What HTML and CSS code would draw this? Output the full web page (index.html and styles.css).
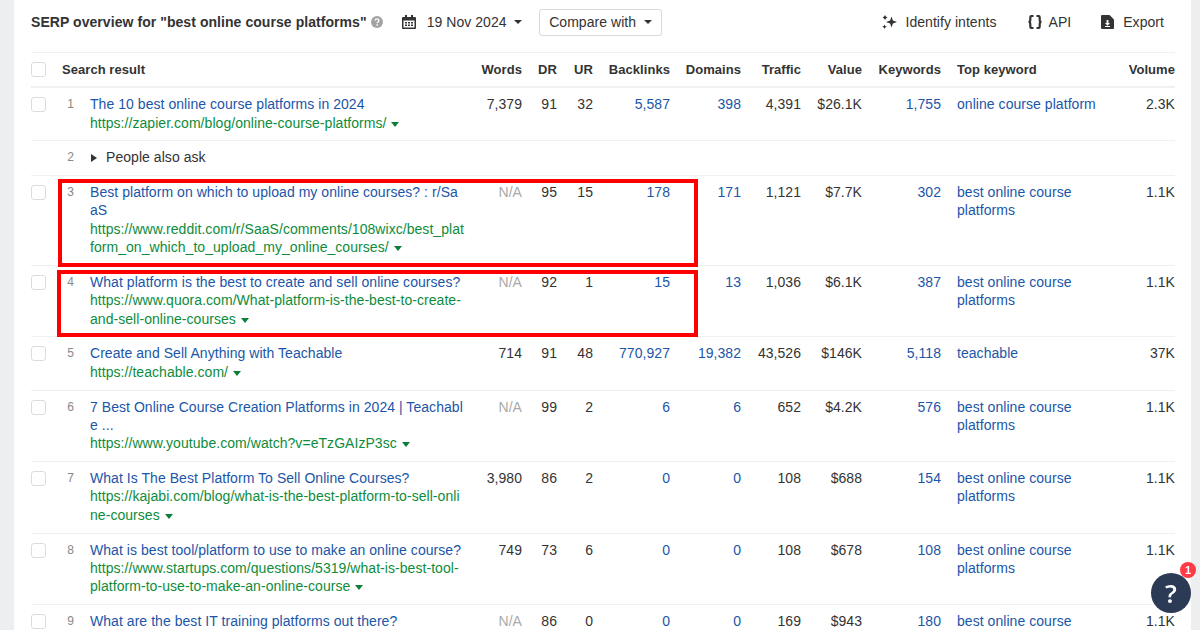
FILE: index.html
```html
<!DOCTYPE html>
<html lang="en">
<head>
    <meta charset="UTF-8">
    <title>SERP overview</title>
    <link rel="stylesheet" href="styles.css">
</head>
<body>
    <div class="panel">
        <div class="toolbar">
            <div class="serp-title">SERP overview for "best online course platforms"</div>
            <svg class="help-icon" viewBox="0 0 12 12"><circle cx="6" cy="6" r="6" fill="#a3a3a3"/><path d="M4.200 4.600c0-2.300 3.700-2.300 3.700-.1 0 1.400-1.600 1.300-1.600 2.700" fill="none" stroke="#fff" stroke-width="1.300"/><rect x="5.500" y="8.200" width="1.500" height="1.500" fill="#fff"/></svg>
            <div class="date-picker">
                <svg class="calendar-icon" viewBox="0 0 14 14"><path fill="#333" d="M1 2h2V0h2v2h4V0h2v2h2a1 1 0 0 1 1 1v10a1 1 0 0 1-1 1H1a1 1 0 0 1-1-1V3a1 1 0 0 1 1-1zm.5 3.500v7h11v-7z"/><path fill="#333" d="M3 7h2v1.500H3zM6 7h2v1.500H6zM9 7h2v1.500H9zM3 9.500h2V11H3zM6 9.500h2V11H6zM9 9.500h2V11H9z"/></svg>
                <span>19 Nov 2024</span>
                <span class="caret"></span>
            </div>
            <div class="compare-btn">Compare with <span class="caret"></span></div>
            <div class="toolbar-actions">
                <div class="action action-intents">
                    <svg class="action-icon" viewBox="0 0 15 14"><path fill="#333" d="M9.500 1.500l1.400 4.100L15 7l-4.100 1.400-1.400 4.100-1.400-4.100L4 7l4.100-1.400z"/><path fill="#333" d="M3 0l.9 1.600L5.500 2.500l-1.600.9L3 5l-.9-1.600L.5 2.500l1.600-.9zM2.500 9.500l.7 1.600 1.600.7-1.600.7-.7 1.500-.7-1.500-1.600-.7 1.600-.7z"/></svg>
                    <span>Identify intents</span>
                </div>
                <div class="action action-api">
                    <svg class="action-icon api-icon" viewBox="0 0 16 14"><path fill="none" stroke="#333" stroke-width="2.200" d="M6.500 1H4.800C3.800 1 3.300 1.500 3.300 2.500V5c0 1-.5 2-1.800 2 1.300 0 1.800 1 1.800 2v2.500c0 1 .5 1.500 1.500 1.500h1.700M9.500 1h1.700c1 0 1.500.5 1.500 1.500V5c0 1 .5 2 1.800 2-1.300 0-1.800 1-1.800 2v2.500c0 1-.5 1.500-1.500 1.500H9.500"/></svg>
                    <span>API</span>
                </div>
                <div class="action">
                    <svg class="action-icon export-icon" viewBox="0 0 13 14"><path fill="#333" d="M1 0h7.500L13 4.500V13a1 1 0 0 1-1 1H1a1 1 0 0 1-1-1V1a1 1 0 0 1 1-1z"/><path fill="#fff" d="M5.600 5h1.800v3H9l-2.500 2.700L4 8h1.600z"/><rect x="4" y="11" width="5" height="1" fill="#fff"/></svg>
                    <span>Export</span>
                </div>
            </div>
        </div>

        <table class="serp-table">
            <colgroup>
                <col class="c-check"><col class="c-num"><col class="c-result"><col class="c-words"><col class="c-dr"><col class="c-ur">
                <col class="c-backlinks"><col class="c-domains"><col class="c-traffic"><col class="c-value"><col class="c-keywords"><col class="c-top"><col class="c-volume">
            </colgroup>
            <thead>
                <tr>
                    <th><span class="checkbox"></span></th>
                    <th colspan="2" class="left">Search result</th>
                    <th>Words</th><th>DR</th><th>UR</th><th>Backlinks</th><th>Domains</th><th>Traffic</th><th>Value</th><th>Keywords</th>
                    <th class="left top-kw">Top keyword</th><th>Volume</th>
                </tr>
            </thead>
            <tbody>
                <tr>
                    <td><span class="checkbox"></span></td><td class="num">1</td>
                    <td class="result"><a class="title">The 10 best online course platforms in 2024</a><a class="url">https://zapier.com/blog/online-course-platforms/ <span class="caret green"></span></a></td>
                    <td>7,379</td><td>91</td><td>32</td><td class="link">5,587</td><td class="link">398</td><td>4,391</td><td>$26.1K</td><td class="link">1,755</td>
                    <td class="link top-kw">online course platform</td><td>2.3K</td>
                </tr>
                <tr class="paa-row">
                    <td></td><td class="num">2</td>
                    <td colspan="11" class="left"><span class="caret-right"></span>People also ask</td>
                </tr>
                <tr>
                    <td><span class="checkbox"></span></td><td class="num">3</td>
                    <td class="result"><a class="title">Best platform on which to upload my online courses? : r/SaaS</a><a class="url">https://www.reddit.com/r/SaaS/comments/108wixc/best_platform_on_which_to_upload_my_online_courses/ <span class="caret green"></span></a></td>
                    <td class="na">N/A</td><td>95</td><td>15</td><td class="link">178</td><td class="link">171</td><td>1,121</td><td>$7.7K</td><td class="link">302</td>
                    <td class="link top-kw">best online course platforms</td><td>1.1K</td>
                </tr>
                <tr>
                    <td><span class="checkbox"></span></td><td class="num">4</td>
                    <td class="result"><a class="title">What platform is the best to create and sell online courses?</a><a class="url">https://www.quora.com/What-platform-is-the-best-to-create-and-sell-online-courses <span class="caret green"></span></a></td>
                    <td class="na">N/A</td><td>92</td><td>1</td><td class="link">15</td><td class="link">13</td><td>1,036</td><td>$6.1K</td><td class="link">387</td>
                    <td class="link top-kw">best online course platforms</td><td>1.1K</td>
                </tr>
                <tr>
                    <td><span class="checkbox"></span></td><td class="num">5</td>
                    <td class="result"><a class="title">Create and Sell Anything with Teachable</a><a class="url">https://teachable.com/ <span class="caret green"></span></a></td>
                    <td>714</td><td>91</td><td>48</td><td class="link">770,927</td><td class="link">19,382</td><td>43,526</td><td>$146K</td><td class="link">5,118</td>
                    <td class="link top-kw">teachable</td><td>37K</td>
                </tr>
                <tr>
                    <td><span class="checkbox"></span></td><td class="num">6</td>
                    <td class="result"><a class="title">7 Best Online Course Creation Platforms in 2024 | Teachable ...</a><a class="url">https://www.youtube.com/watch?v=eTzGAIzP3sc <span class="caret green"></span></a></td>
                    <td class="na">N/A</td><td>99</td><td>2</td><td class="link">6</td><td class="link">6</td><td>652</td><td>$4.2K</td><td class="link">576</td>
                    <td class="link top-kw">best online course platforms</td><td>1.1K</td>
                </tr>
                <tr>
                    <td><span class="checkbox"></span></td><td class="num">7</td>
                    <td class="result"><a class="title">What Is The Best Platform To Sell Online Courses?</a><a class="url">https://kajabi.com/blog/what-is-the-best-platform-to-sell-online-courses <span class="caret green"></span></a></td>
                    <td>3,980</td><td>86</td><td>2</td><td class="link">0</td><td class="link">0</td><td>108</td><td>$688</td><td class="link">154</td>
                    <td class="link top-kw">best online course platforms</td><td>1.1K</td>
                </tr>
                <tr>
                    <td><span class="checkbox"></span></td><td class="num">8</td>
                    <td class="result"><a class="title">What is best tool/platform to use to make an online course?</a><a class="url">https://www.startups.com/questions/5319/what-is-best-tool-platform-to-use-to-make-an-online-course <span class="caret green"></span></a></td>
                    <td>749</td><td>73</td><td>6</td><td class="link">0</td><td class="link">0</td><td>108</td><td>$678</td><td class="link">108</td>
                    <td class="link top-kw">best online course platforms</td><td>1.1K</td>
                </tr>
                <tr>
                    <td><span class="checkbox"></span></td><td class="num">9</td>
                    <td class="result"><a class="title">What are the best IT training platforms out there?</a></td>
                    <td class="na">N/A</td><td>86</td><td>0</td><td class="link">0</td><td class="link">0</td><td>169</td><td>$943</td><td class="link">180</td>
                    <td class="link top-kw">best online course platforms</td><td>1.1K</td>
                </tr>
            </tbody>
        </table>
    </div>

    <!-- red annotation boxes drawn over the screenshot -->
    <div class="mark mark-one"></div>
    <div class="mark mark-two"></div>

    <div class="help-btn">?<span class="help-badge">1</span></div>
</body>
</html>
```

FILE: styles.css
```css
html, body {
    height: 630px;
    overflow: hidden;
}
body {
    margin: 0;
    background-color: #eceef0;
    font-family: "Liberation Sans", Arial, sans-serif;
    font-size: 14px;
    letter-spacing: 0.05px;
    color: #333;
}
.panel {
    margin-left: 14px;
    width: 1177px;
    height: 630px;
    padding: 0 16px 0 17px;
    box-sizing: border-box;
    background: white;
}

.toolbar {
    display: flex;
    align-items: center;
    height: 52px;
    padding-bottom: 8px;
    box-sizing: border-box;
}
.serp-title {
    font-weight: bold;
    white-space: nowrap;
    letter-spacing: 0.06px;
}
.help-icon {
    width: 12px;
    height: 12px;
    margin-left: 4px;
}
.date-picker {
    display: flex;
    align-items: center;
    margin-left: 19px;
}
.calendar-icon {
    width: 14px;
    height: 14px;
    margin-right: 11px;
}
.date-picker .caret {
    margin-left: 7px;
}
.compare-btn {
    margin-left: 17px;
    width: 123px;
    height: 27px;
    padding-left: 1px;
    box-sizing: border-box;
    border: 1px solid #d9d9d9;
    border-radius: 3px;
    display: flex;
    align-items: center;
    justify-content: center;
    gap: 4px;
    white-space: pre;
}
.toolbar-actions {
    margin-left: auto;
    margin-right: 11px;
    display: flex;
    align-items: center;
}
.action {
    display: flex;
    align-items: center;
    margin-left: 30px;
}
.action-icon {
    width: 15px;
    height: 14px;
    margin-right: 8px;
}
.api-icon {
    width: 16px;
    margin-right: 6px;
}
.export-icon {
    width: 13px;
    margin-right: 9px;
}

.caret {
    display: inline-block;
    width: 0;
    height: 0;
    border-left: 4px solid transparent;
    border-right: 4px solid transparent;
    border-top: 4px solid #333;
    vertical-align: middle;
}
.caret.green {
    border-top: 5px solid #0b7f3a;
    margin-left: 1px;
    vertical-align: 1px;
}
.caret-right {
    display: inline-block;
    width: 0;
    height: 0;
    border-top: 4px solid transparent;
    border-bottom: 4px solid transparent;
    border-left: 6px solid #333;
    margin: 0 9px 0 1px;
}

.serp-table {
    width: 1144px;
    table-layout: fixed;
    border-collapse: collapse;
    line-height: 18.4px;
}
.c-check { width: 31px; }
.c-num { width: 28px; }
.c-result { width: 377px; }
.c-words { width: 55px; }
.c-dr { width: 35px; }
.c-ur { width: 36px; }
.c-backlinks { width: 77px; }
.c-domains { width: 71px; }
.c-traffic { width: 60px; }
.c-value { width: 61px; }
.c-keywords { width: 79px; }
.c-top { width: 170px; }
.c-volume { width: 64px; }

.serp-table th,
.serp-table td {
    padding: 7px 0 8.3px;
    text-align: right;
    vertical-align: top;
    border-top: 1px solid #f0f0f0;
}
.serp-table th {
    font-size: 13px;
    border-bottom: 2px solid #f0f0f0;
    padding: 8px 0 6.8px;
}
.serp-table th:first-child,
.serp-table td:first-child {
    text-align: left;
}
.serp-table .left {
    text-align: left;
}
.serp-table .top-kw {
    text-align: left;
    padding-left: 16px;
    padding-right: 14px;
}
.checkbox {
    display: block;
    width: 15px;
    height: 15px;
    box-sizing: border-box;
    border: 1px solid #dcdcdc;
    border-radius: 3px;
    margin-top: 2px;
}
.serp-table th .checkbox {
    margin-top: 1px;
}
.serp-table .num {
    padding-right: 16px;
    font-size: 12px;
    color: #888;
}
.serp-table .result {
    text-align: left;
    word-break: break-all;
    padding-right: 3px;
}
.title,
.url {
    display: block;
}
.title {
    color: #1b56a8;
}
.url {
    color: #0e8c3c;
}
.link {
    color: #1b56a8;
}
.na {
    color: #aaa;
}

.mark {
    position: absolute;
    box-sizing: border-box;
    border: 4px solid #f00;
}
.mark-one {
    left: 58px;
    top: 179px;
    width: 640px;
    height: 88px;
}
.mark-two {
    left: 57px;
    top: 270px;
    width: 641px;
    height: 67px;
}

.help-btn {
    position: fixed;
    left: 1151px;
    top: 573px;
    width: 40px;
    height: 40px;
    border-radius: 50%;
    background-color: #2b3a55;
    color: white;
    font-family: "Open Sans", sans-serif;
    font-size: 26px;
    font-weight: 600;
    line-height: 40px;
    text-align: center;
}
.help-badge {
    position: absolute;
    left: 29px;
    top: -11px;
    width: 16px;
    height: 16px;
    border-radius: 50%;
    background-color: #ff3b47;
    font-family: "Liberation Sans", sans-serif;
    font-size: 11px;
    font-weight: bold;
    line-height: 16px;
}
```
